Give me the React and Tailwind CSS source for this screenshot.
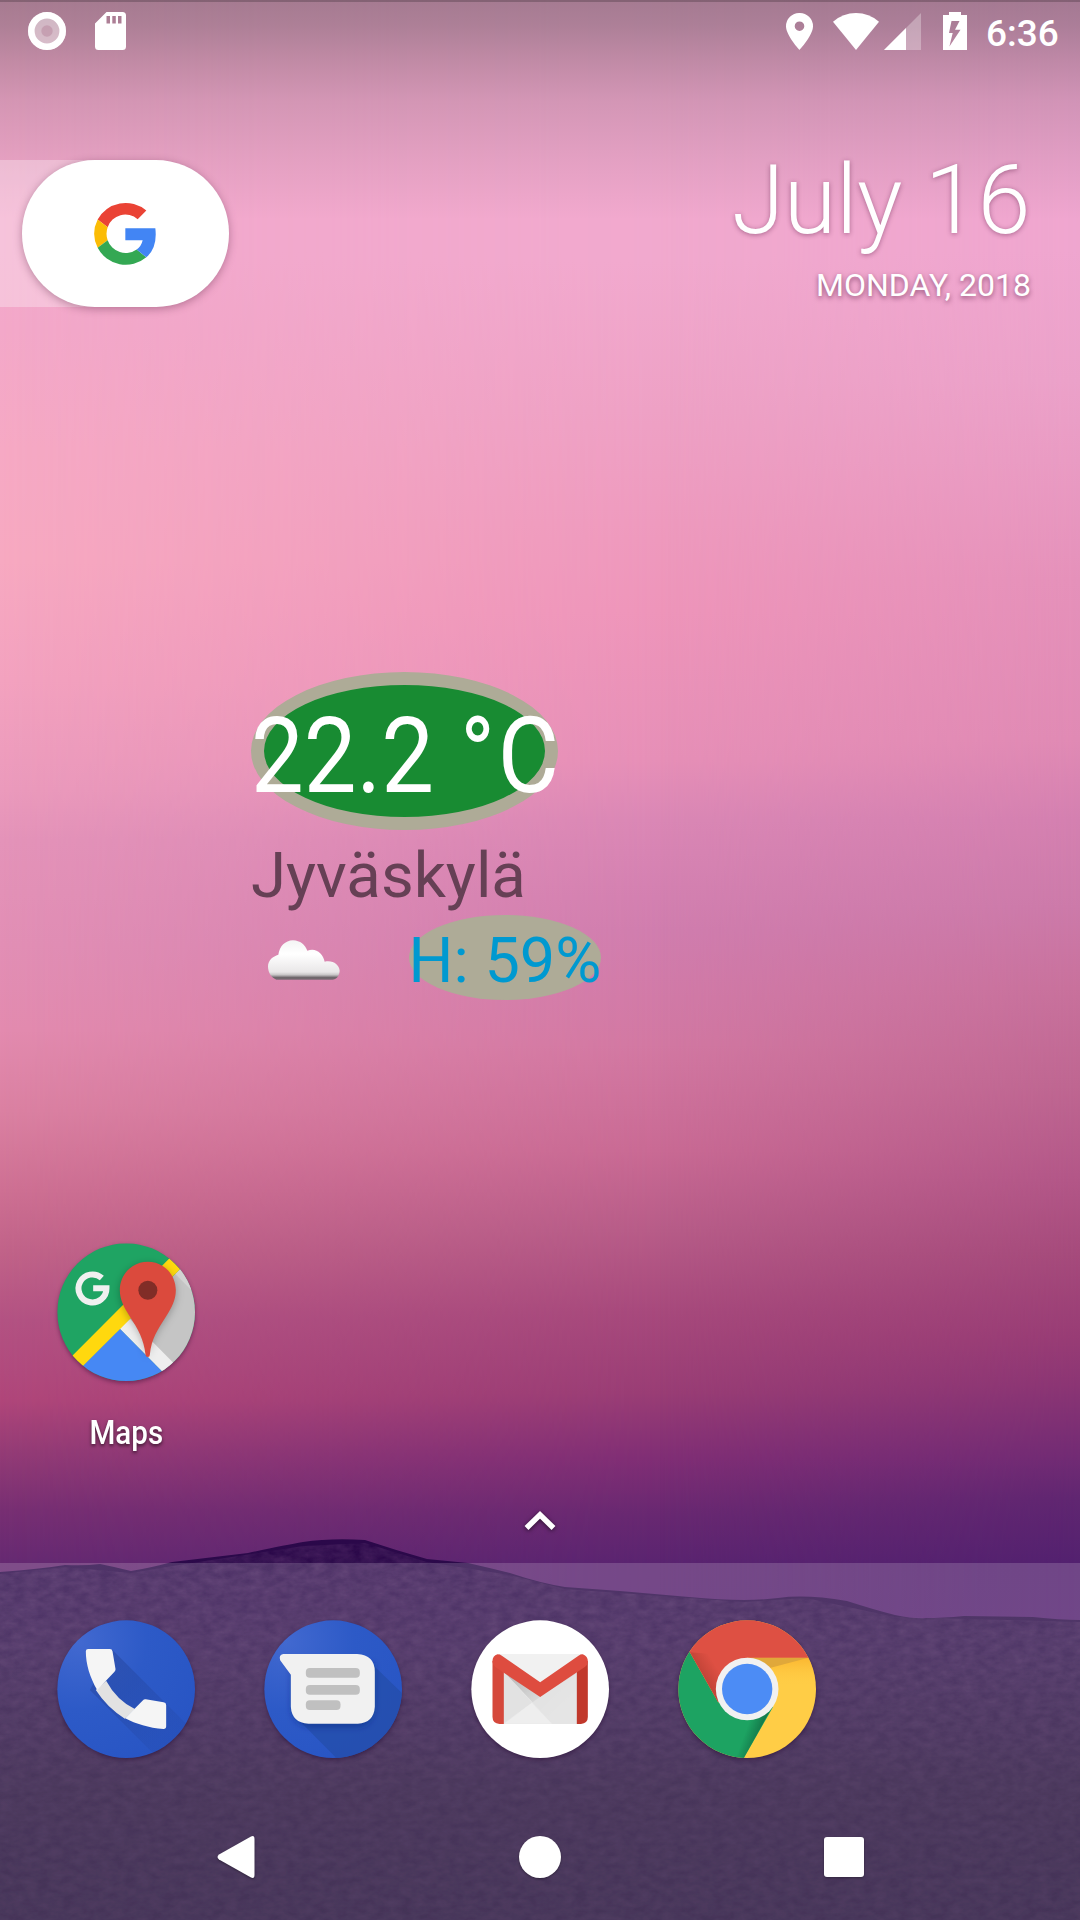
import React from "react";

function Wallpaper() {
  return (
    <div className="absolute inset-0 -z-10">
      <div className="absolute inset-0 bg-[linear-gradient(180deg,#f3a9cc_0px,#f3a9cc_250px,#f3a8c9_330px,#f6a9c4_450px,#f7a9c1_560px,#f3a2bf_680px,#eb9abc_790px,#e493b9_840px,#e28fb5_945px,#e38baf_1030px,#db81a2_1110px,#ce7093_1190px,#c06288_1255px,#b35283_1320px,#b0467a_1400px,#953c76_1450px,#782f73_1510px,#672a72_1560px,#602770_1640px)]" />
      <div className="absolute inset-0 bg-[linear-gradient(180deg,#f1a9ce_0px,#f1a9ce_260px,#eea1c5_410px,#ee99bd_540px,#ee95ba_610px,#e68fb7_760px,#da87b5_820px,#d07dae_930px,#d278a2_1045px,#c96a94_1150px,#b75c88_1230px,#a7497c_1312px,#993d75_1393px,#802e75_1458px,#682871_1515px,#5a2470_1563px,#562370_1640px)] [mask-image:linear-gradient(90deg,transparent_0%,#000_61%)]" />
      <div className="absolute inset-0 bg-[linear-gradient(180deg,#efa6cf_0px,#efa6cf_250px,#eba1c9_380px,#e99bc3_460px,#e591ba_580px,#e08ab4_740px,#d480b0_820px,#cc7aa9_907px,#c8719c_988px,#be6691_1086px,#b35788_1175px,#a54a7b_1256px,#983c75_1337px,#8b3574_1385px,#712b74_1458px,#602671_1499px,#53216f_1563px,#542270_1640px)] [mask-image:linear-gradient(90deg,transparent_61%,#000_100%)]" />
      <svg className="absolute inset-0" width="1080" height="1920" viewBox="0 0 1080 1920">
        <defs>
          <linearGradient id="hill" x1="0" y1="1540" x2="0" y2="1920" gradientUnits="userSpaceOnUse">
            <stop offset="0" stopColor="#2b084a" />
            <stop offset="0.3" stopColor="#2d1049" />
            <stop offset="0.65" stopColor="#240e3a" />
            <stop offset="1" stopColor="#1f0b36" />
          </linearGradient>
          <filter id="grain" x="0" y="0" width="100%" height="100%">
            <feTurbulence type="fractalNoise" baseFrequency="0.08 0.14" numOctaves="3" seed="4" />
            <feColorMatrix values="0 0 0 0 0.42  0 0 0 0 0.2  0 0 0 0 0.42  0.28 0 0 0 -0.05" />
            <feComposite operator="in" in2="SourceGraphic" />
          </filter>
          <linearGradient id="fade" x1="0" y1="1540" x2="0" y2="1920" gradientUnits="userSpaceOnUse">
            <stop offset="0" stopColor="#fff" />
            <stop offset="0.7" stopColor="#777" />
            <stop offset="1" stopColor="#777" />
          </linearGradient>
          <mask id="fadeMask"><rect y="1500" width="1080" height="420" fill="url(#fade)" /></mask>
        </defs>
        <path fill="url(#hill)" d="M0 1572Q40 1569 65 1565Q85 1566 100 1564Q115 1567 131 1571Q150 1568 172 1562L248 1553Q285 1545 303 1542Q330 1538 365 1540Q395 1550 427 1559L468 1563Q490 1568 510 1573Q540 1583 565 1587L620 1591L689 1597Q720 1600 744 1600Q762 1600 778 1598Q806 1594 847 1601Q875 1610 895 1615Q915 1619 926 1618Q942 1618 964 1616L1033 1617Q1060 1620 1080 1620V1920H0Z" />
        <g mask="url(#fadeMask)">
          <path filter="url(#grain)" d="M0 1574L65 1567L131 1573L172 1566L303 1546L365 1543L427 1562L510 1575L565 1589L744 1602L806 1598L895 1617L1080 1622V1920H0Z" />
        </g>
      </svg>
      <div className="absolute inset-x-0 top-0 h-[240px] bg-[linear-gradient(180deg,rgba(45,50,50,0.39)_0px,rgba(45,50,50,0.35)_25px,rgba(50,50,50,0.26)_60px,rgba(60,55,60,0.17)_100px,rgba(60,55,60,0.08)_160px,transparent_220px)]" />
      <div className="absolute inset-x-0 top-0 h-[2px] bg-black/20" />
      <div className="absolute inset-x-0 bottom-0 h-[357px] bg-white/[0.17]" />
    </div>
  );
}

function StatusBar() {
  return (
    <header className="flex h-[62px] items-center justify-between pr-[21px] pl-7 text-white">
      <div className="flex items-center gap-[29px]">
        <svg width="38" height="38" viewBox="0 0 38 38">
          <circle cx="19" cy="19" r="19" fill="#fff" fillOpacity="0.45" />
          <circle cx="19" cy="19" r="15.7" fill="none" stroke="#fff" strokeWidth="6.6" />
          <circle cx="19" cy="19" r="5.7" fill="#b98aa0" fillOpacity="0.55" />
        </svg>
        <svg width="31" height="38" viewBox="0 0 31 38">
          <path fill="#fff" fillRule="evenodd" d="M11.5 0H27.5Q31 0 31 3.5V34.5Q31 38 27.5 38H3.5Q0 38 0 34.5V11.5ZM11.5 4V11.5H15V4ZM17.3 4V11.5H20.8V4ZM23 4V11.5H26.5V4Z" />
        </svg>
      </div>
      <div className="flex items-center">
        <svg width="27" height="37" viewBox="0 0 27 37">
          <path fill="#fff" fillRule="evenodd" d="M13.5 0A13.3 13.3 0 0 1 27 13.3C27 22.5 13.5 37 13.5 37S0 22.5 0 13.3A13.3 13.3 0 0 1 13.5 0ZM13.5 8.4a4.8 4.8 0 1 0 0 9.6a4.8 4.8 0 1 0 0-9.6Z" />
        </svg>
        <svg className="ml-5" width="46" height="37" viewBox="0 0 46 37">
          <path fill="#fff" d="M0 8.7Q10 0 23 0T46 8.7L23 37Z" />
        </svg>
        <svg className="ml-[5px]" width="37" height="37" viewBox="0 0 37 37">
          <path fill="#fff" fillOpacity="0.3" d="M0 37L37 0V37Z" />
          <path fill="#fff" d="M0 37L22 15V37Z" />
        </svg>
        <svg className="ml-[22px]" width="24" height="38" viewBox="0 0 24 38">
          <path fill="#fff" fillRule="evenodd" d="M6 0H18V3H24V38H0V3H6ZM8.5 9L6 21H9.7L6.4 34.5L17.5 17.8H12L16.5 9Z" />
        </svg>
        <span className="ml-[19px] h-[42px] w-[73px] pt-[2px] text-[37px] leading-[44px] font-medium whitespace-nowrap">6:36</span>
      </div>
    </header>
  );
}

function SearchPill() {
  return (
    <div className="flex h-[147px] w-[229px] items-center">
      <div className="h-full w-[96px] shrink-0 bg-white/30" />
      <div className="relative -ml-[74px] flex h-full w-[207px] items-center justify-center rounded-[73px] bg-white pr-[2px] pb-[1px] shadow-[0_2px_9px_rgba(70,20,50,0.35)]">
        <svg width="62" height="63" viewBox="282 605 186 190" preserveAspectRatio="none">
          <path fill="#ea4335" d="M293 658A95 95 0 0 1 439 631L413 657A56 56 0 0 0 323 681Z" />
          <path fill="#fbbc05" d="M293 658L323 681A58 58 0 0 0 323 720L293 743A95 95 0 0 1 293 658Z" />
          <path fill="#34a853" d="M293 743L323 720A57 57 0 0 0 410 748L439 772A95 95 0 0 1 293 743Z" />
          <path fill="#4285f4" d="M376 684H466Q473 742 439 772L410 748Q424 738 428 720H376Z" />
        </svg>
      </div>
    </div>
  );
}

function DateWidget() {
  return (
    <div className="flex flex-col items-end pr-[50px] text-white">
      <div className="text-[95.500px] leading-[113px] font-light tracking-[-0.4px] whitespace-nowrap [text-shadow:0_1px_5px_rgba(80,20,60,0.45)]">July 16</div>
      <div className="mt-[9px] -mr-px text-[32px] leading-[38px] whitespace-nowrap [text-shadow:0_2px_5px_rgba(80,20,60,0.6)]">MONDAY, 2018</div>
    </div>
  );
}

function Cloud() {
  return (
    <svg width="74" height="43" viewBox="112 867 222 129">
      <defs>
        <linearGradient id="cloud" x1="0" y1="870" x2="0" y2="990" gradientUnits="userSpaceOnUse">
          <stop offset="0" stopColor="#f4f4f4" />
          <stop offset="0.35" stopColor="#ffffff" />
          <stop offset="0.8" stopColor="#e9e7e8" />
          <stop offset="0.87" stopColor="#c8c6c7" />
          <stop offset="0.94" stopColor="#6b6469" />
          <stop offset="1" stopColor="#7d6d77" />
        </linearGradient>
        <filter id="soft"><feGaussianBlur stdDeviation="2.2" /></filter>
      </defs>
      <path filter="url(#soft)" fill="url(#cloud)" d="M140 989C122 982 115 965 115 949C115 930 130 919 146 914C150 888 166 872 190 871C212 872 226 884 233 902C258 892 280 909 285 935C308 929 329 943 330 962C329 978 320 988 308 989Z" />
    </svg>
  );
}

function WeatherWidget() {
  return (
    <section className="ml-[251px] flex w-[360px] flex-col items-start">
      <div className="flex h-[158px] w-[307px] items-center rounded-[50%] border-[13px] border-[#aeab97] bg-[#188b32]">
        <span className="-ml-[13px] block origin-left scale-x-[0.886] pt-[9px] text-[106px] leading-[126px] [word-spacing:3px] whitespace-nowrap text-white">
          22.2 <span className="tracking-[3px]">°</span>C
        </span>
      </div>
      <div className="mt-[8px] h-[77px] text-[63.500px] leading-[75px] whitespace-nowrap text-[#664055]">Jyväskylä</div>
      <div className="flex h-[85px] items-center">
        <div className="ml-4 pt-[6px]">
          <Cloud />
        </div>
        <div className="ml-[68px] flex h-[85px] w-[192px] items-center justify-center rounded-[50%] bg-[#aeab97]">
          <span className="pt-[5px] text-[63px] leading-[75px] whitespace-nowrap text-[#0099d0]">H: 59%</span>
        </div>
      </div>
    </section>
  );
}

const iconClass = "block h-[138px] w-[138px] shrink-0 overflow-visible [filter:drop-shadow(0_2px_2px_rgba(30,0,40,0.4))]";

function MapsIcon() {
  return (
    <svg className={iconClass} viewBox="81.5 69 414 414">
      <defs>
        <clipPath id="mapsClip"><circle cx="289" cy="276.5" r="206.5" /></clipPath>
        <filter id="pinShadow" x="-50%" y="-30%" width="200%" height="160%"><feGaussianBlur stdDeviation="12" /></filter>
      </defs>
      <g clipPath="url(#mapsClip)">
        <rect x="82" y="70" width="414" height="414" fill="#1fa463" />
        <path fill="#c5c5c5" d="M449 149L270 326L430 486H500V130Z" />
        <path fill="#d3d3d3" d="M449 149L436 162L500 226V130Z" />
        <path fill="#eeeeee" d="M300 296L270 326L396 454L420 470L434 432Z" />
        <path fill="#4688f4" d="M270 326L140 456V500H442Z" />
        <path fill="#ffd80e" d="M419 115L129 406L100 435L130 466L160 437L451 147Z" />
        <path filter="url(#pinShadow)" fill="#000" fillOpacity="0.28" d="M354 132C307 132 270 170 270 216C270 285 340 315 352 412C370 320 438 285 438 216C438 170 400 132 354 132Z" />
      </g>
      <path fill="#db4a3d" d="M354 125C307 125 270 163 270 210C270 241 283 262 299 288C325 329 342 357 347 404Q348 411 354 411T360 404C365 356 383 330 409 289C425 263 438 241 438 210C438 163 401 125 354 125Z" />
      <circle cx="354" cy="211" r="28.5" fill="#812d27" />
      <path fill="none" stroke="#f0f0f0" strokeWidth="18" d="M216 174A42 42 0 1 0 230 205H190" />
    </svg>
  );
}

function PhoneIcon() {
  return (
    <svg className={iconClass} viewBox="81.5 90 414 414">
      <defs>
        <radialGradient id="blueA" cx="0.15" cy="0.15" r="1"><stop offset="0" stopColor="#4269d0" /><stop offset="0.5" stopColor="#2d5ac7" /><stop offset="1" stopColor="#2855c4" /></radialGradient>
        <linearGradient id="phoneShade" x1="240" y1="230" x2="415" y2="430" gradientUnits="userSpaceOnUse"><stop offset="0" stopColor="#223f93" stopOpacity="0.42" /><stop offset="1" stopColor="#223f93" stopOpacity="0.16" /></linearGradient>
        <clipPath id="phoneClip"><circle cx="289" cy="297.5" r="206.5" /></clipPath>
      </defs>
      <circle cx="289" cy="297.5" r="206.5" fill="url(#blueA)" />
      <path clipPath="url(#phoneClip)" fill="url(#phoneShade)" d="M246 178L520 452V550H430L180 300Z" />
      <path fill="#e2e2e2" d="M198 300L229 272Q260 330 315 357L285 386Q231 352 198 300Z" />
      <path fill="#f5f5f5" d="M175 177H240Q247 177 248 184L257 237Q258 241 254 245L202 300C180 262 168 223 168 184Q168 177 175 177Z" />
      <path fill="#f5f5f5" d="M348 328L401 337Q409 338 409 345V409Q409 417 401 417C357 414 318 402 286 385L338 332Q343 327 348 328Z" />
    </svg>
  );
}

function MessagesIcon() {
  return (
    <svg className={iconClass} viewBox="702.5 90 414 414">
      <defs>
        <clipPath id="msgClip"><circle cx="910" cy="297.5" r="206.5" /></clipPath>
        <filter id="msgBlur" x="-20%" y="-20%" width="140%" height="150%"><feGaussianBlur stdDeviation="9" /></filter>
      </defs>
      <circle cx="910" cy="297.5" r="206.5" fill="url(#blueA)" />
      <g clipPath="url(#msgClip)">
        <path fill="#244da9" fillOpacity="0.75" d="M1020 216L1180 370V560H975L800 383Z" />
        <path filter="url(#msgBlur)" fill="#0c2a77" fillOpacity="0.4" d="M784 220H1035V360Q1025 408 985 412H835Q790 402 784 360Z" />
      </g>
      <path fill="#f1f1f1" d="M760 192H982Q1035 195 1035 245V350Q1032 398 984 401H836Q786 398 783 350V254L751 211Q746 194 760 192Z" />
      <g fill="#c0c0c0">
        <rect x="828" y="234" width="162" height="29" rx="12" />
        <rect x="828" y="285" width="162" height="29" rx="12" />
        <rect x="828" y="331" width="104" height="29" rx="12" />
      </g>
    </svg>
  );
}

function GmailIcon() {
  return (
    <svg className={iconClass} viewBox="62.5 90 414 414">
      <defs>
        <linearGradient id="mailShade" x1="160" y1="250" x2="300" y2="400" gradientUnits="userSpaceOnUse"><stop offset="0" stopColor="#b5b5b5" /><stop offset="0.6" stopColor="#d8d8d8" /><stop offset="1" stopColor="#e6e6e6" /></linearGradient>
      </defs>
      <circle cx="270" cy="297.5" r="206.5" fill="#fff" />
      <path fill="#e8e8e8" d="M146 192H396V402H146Z" />
      <path fill="#f1f1f1" d="M148 192H394L270 278Z" />
      <path fill="#e2e2e2" d="M160 244L245 338L160 400Z" />
      <path fill="url(#mailShade)" d="M160 244L270 320L306 299L380 246V402H308Z" />
      <path fill="#e5e5e5" fillOpacity="0.8" d="M270 320L380 250V402H308L245 338Z" />
      <path fill="#eeeeee" d="M245 338L162 401H305Z" />
      <path fill="#d5483b" d="M127 212L161 236V402H148Q127 400 127 381Z" />
      <path fill="#c1382b" d="M413 212L380 236V402H392Q413 400 413 381Z" />
      <path fill="#de4c3f" d="M127 216Q126 198 142 193Q149 193 155 197L270 277L385 197Q391 193 398 193Q414 199 413 216Q412 225 405 230L270 321L135 231Q128 225 127 216Z" />
    </svg>
  );
}

function ChromeIcon() {
  return (
    <svg className={iconClass} viewBox="684.5 90 414 414">
      <defs>
        <clipPath id="chromeClip"><circle cx="892" cy="297.5" r="206.5" /></clipPath>
        <linearGradient id="redFold" x1="790" y1="215" x2="745" y2="243" gradientUnits="userSpaceOnUse"><stop offset="0" stopColor="#932f25" stopOpacity="0" /><stop offset="1" stopColor="#932f25" stopOpacity="0.4" /></linearGradient>
        <linearGradient id="greenFold" x1="885" y1="430" x2="925" y2="445" gradientUnits="userSpaceOnUse"><stop offset="0" stopColor="#0d5c3a" stopOpacity="0" /><stop offset="1" stopColor="#0d5c3a" stopOpacity="0.6" /></linearGradient>
        <linearGradient id="yellowFold" x1="0" y1="203" x2="0" y2="290" gradientUnits="userSpaceOnUse"><stop offset="0" stopColor="#f9ad27" stopOpacity="0.7" /><stop offset="1" stopColor="#ffcd46" stopOpacity="0" /></linearGradient>
      </defs>
      <g clipPath="url(#chromeClip)">
        <rect x="685" y="91" width="414" height="414" fill="#ffcd46" />
        <path fill="url(#yellowFold)" d="M892 203H1100V290H892Z" />
        <path fill="#e0a83a" d="M892 203H1076L960 234Z" />
        <path fill="#1da362" d="M685 120L720 187L805 337L970 350L881 506H680Z" />
        <path fill="url(#greenFold)" d="M850 385L970 345L881 506H835Z" />
        <path fill="#de5043" d="M720 187L680 120V80H1110V203H892L805 337Z" />
        <path fill="url(#redFold)" d="M720 187L900 200L805 337Z" />
      </g>
      <circle cx="892" cy="297" r="94" fill="#f1f1f1" />
      <circle cx="892" cy="297" r="75.5" fill="#4c8cf5" />
    </svg>
  );
}

function NavBar() {
  return (
    <nav className="mt-[64px] flex h-[64px] items-center pt-[6px] [filter:drop-shadow(0_1px_1px_rgba(0,0,0,0.35))]">
      <svg className="ml-[217px]" width="38" height="42" viewBox="0 0 38 42">
        <path fill="#fff" d="M34 .5Q37.5-1 37.500 3V39Q37.500 43 34 41.500L2 23.500Q-1 21 2 18.500Z" />
      </svg>
      <div className="ml-[264px] h-[42px] w-[42px] rounded-full bg-white" />
      <div className="ml-[263px] h-10 w-10 rounded-[3px] bg-white" />
    </nav>
  );
}

export default function App() {
  return (
    <main className="relative isolate flex h-[1920px] w-[1080px] flex-col overflow-hidden font-['Roboto',sans-serif]">
      <Wallpaper />
      <StatusBar />
      <div className="mt-[82px] flex h-[172px] items-start justify-between">
        <div className="pt-4">
          <SearchPill />
        </div>
        <DateWidget />
      </div>
      <div className="mt-[356px] h-[571px]">
        <WeatherWidget />
      </div>
      <div className="ml-[57px] flex h-[268px] w-[138px] flex-col items-center">
        <MapsIcon />
        <span className="mt-[31px] scale-x-[0.87] text-[34px] leading-[40px] font-medium whitespace-nowrap text-white [text-shadow:0_2px_4px_rgba(0,0,0,0.6)]">Maps</span>
      </div>
      <div className="flex h-[52px] justify-center">
        <svg className="overflow-visible [filter:drop-shadow(0_1px_2px_rgba(0,0,0,0.6))]" width="32" height="20" viewBox="0 0 32 20">
          <path fill="none" stroke="#fff" strokeWidth="5.500" d="M2.500 17L16 3.800L29.500 17" />
        </svg>
      </div>
      <div className="mt-[57px] ml-[57px] flex gap-[69px]">
        <PhoneIcon />
        <MessagesIcon />
        <GmailIcon />
        <ChromeIcon />
      </div>
      <NavBar />
    </main>
  );
}
